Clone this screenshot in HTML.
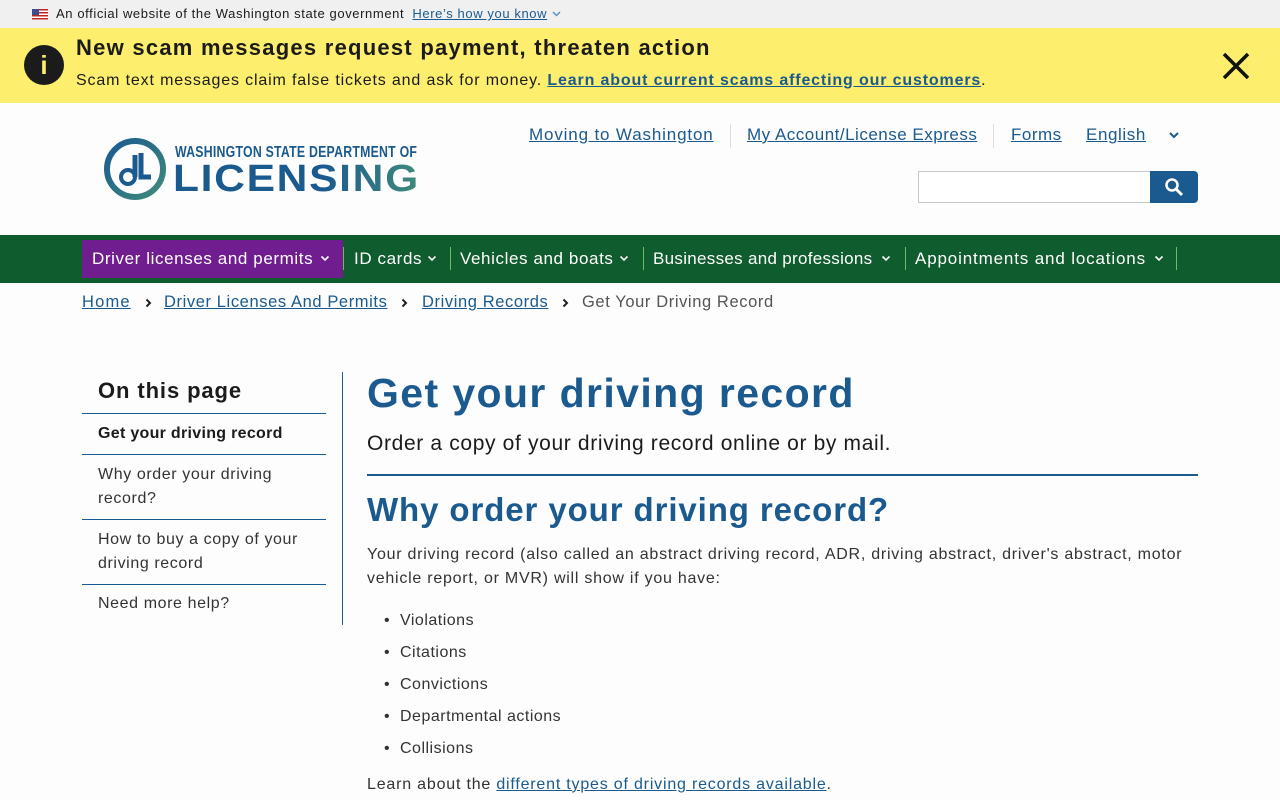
<!DOCTYPE html>
<html><head><meta charset="utf-8"><style>
*{box-sizing:border-box;margin:0;padding:0}
body{width:1280px;height:800px;overflow:hidden;background:#fdfdfd;font-family:"Liberation Sans",sans-serif;color:#1b1b1b;position:relative}
.a{position:absolute;white-space:nowrap}
a{color:#1a5a8f;text-decoration:underline}
.nav{color:#fff;font-size:17px;letter-spacing:0.6px;top:249px}
.bc{top:293px;font-size:16.5px;letter-spacing:0.6px;color:#555}
.ch{position:absolute;top:298px}
.nv{position:absolute;top:255px}
</style></head><body>
<div class="a" style="left:0;top:0;width:1280px;height:28px;background:#f0f0f0"></div>
<div class="a" style="left:32px;top:9px;width:16px;height:11px;background:repeating-linear-gradient(#b22 0 1.5px,#fff 1.5px 3px)"><div style="width:7px;height:6px;background:#3c4d8f"></div></div>
<div class="a" style="left:56px;top:6px;font-size:13px;letter-spacing:0.6px;color:#1b1b1b">An official website of the Washington state government <a style="margin-left:4px;color:#1a5a8f">Here’s how you know</a></div>
<svg class="a" style="left:552px;top:11px" width="9" height="7"><path d="M1 1l3.5 3.5L8 1" fill="none" stroke="#5a8fc8" stroke-width="1.5"/></svg>

<div class="a" style="left:0;top:28px;width:1280px;height:75px;background:#fdee6d"></div>
<div class="a" style="left:24px;top:45px;width:40px;height:40px;border-radius:50%;background:#1b1b1b;color:#fdee6d;font-weight:bold;font-size:26px;text-align:center;line-height:40px">i</div>
<div class="a" style="left:76px;top:35px;font-size:22px;font-weight:bold;letter-spacing:1.25px;color:#1b1b1b">New scam messages request payment, threaten action</div>
<div class="a" style="left:76px;top:72px;font-size:16px;letter-spacing:0.85px;color:#1b1b1b">Scam text messages claim false tickets and ask for money. <a style="font-weight:bold;color:#1a5a8f">Learn about current scams affecting our customers</a>.</div>
<svg class="a" style="left:1222px;top:52px" width="28" height="28" viewBox="0 0 28 28"><path d="M2 2L26 26M26 2L2 26" stroke="#111" stroke-width="3.5"/></svg>

<svg class="a" style="left:103px;top:137px" width="64" height="64" viewBox="0 0 64 64"><defs><linearGradient id="g" x1="0" y1="0" x2="1" y2="1"><stop offset="0" stop-color="#1a5a8f"/><stop offset="1" stop-color="#3f8a7c"/></linearGradient></defs><circle cx="32" cy="32" r="28" fill="none" stroke="url(#g)" stroke-width="6"/><circle cx="25" cy="40" r="7" fill="none" stroke="#1a5a8f" stroke-width="4"/><path d="M32 18v22M38 16v24h10" fill="none" stroke="#1a5a8f" stroke-width="5"/></svg>
<div class="a" style="left:175px;top:144px;font-size:16px;font-weight:bold;color:#1a5a8f;letter-spacing:0.3px;transform:scaleX(0.77);transform-origin:left">WASHINGTON STATE DEPARTMENT OF</div>
<div class="a" style="left:173px;top:158px;font-size:38px;font-weight:bold;letter-spacing:1.5px;background:linear-gradient(90deg,#1a5a8f 60%,#3f8a7c);-webkit-background-clip:text;color:transparent;transform:scaleX(1.12);transform-origin:left">LICENSING</div>

<div class="a" style="left:529px;top:125px;font-size:17px;letter-spacing:0.85px"><a>Moving to Washington</a></div>
<div class="a" style="left:730px;top:124px;width:1px;height:24px;background:#ddd"></div>
<div class="a" style="left:747px;top:125px;font-size:17px;letter-spacing:0.5px"><a>My Account/License Express</a></div>
<div class="a" style="left:993px;top:124px;width:1px;height:24px;background:#ddd"></div>
<div class="a" style="left:1011px;top:125px;font-size:17px;letter-spacing:0.5px"><a>Forms</a></div>
<div class="a" style="left:1086px;top:125px;font-size:17px;letter-spacing:0.6px"><a>English</a></div>
<svg class="a" style="left:1168px;top:130px" width="12" height="10"><path d="M2 3l4 4 4-4" fill="none" stroke="#1a5a8f" stroke-width="2"/></svg>
<div class="a" style="left:918px;top:171px;width:234px;height:32px;border:1px solid #c8c8c8;background:#fff"></div>
<div class="a" style="left:1150px;top:171px;width:48px;height:32px;background:#1a5a8f;border-radius:0 4px 4px 0"></div>
<svg class="a" style="left:1164px;top:177px" width="20" height="20"><circle cx="8" cy="8" r="5.5" fill="none" stroke="#fff" stroke-width="2.5"/><path d="M12 12l6 6" stroke="#fff" stroke-width="3"/></svg>

<div class="a" style="left:0;top:235px;width:1280px;height:48px;background:#0f5c2e"></div>
<div class="a" style="left:82px;top:240px;width:261px;height:38px;background:#6f1d8f"></div>
<div class="a" style="left:343px;top:247px;width:1px;height:23px;background:#6cbf5a"></div>
<div class="a" style="left:450px;top:247px;width:1px;height:23px;background:#6cbf5a"></div>
<div class="a" style="left:643px;top:247px;width:1px;height:23px;background:#6cbf5a"></div>
<div class="a" style="left:905px;top:247px;width:1px;height:23px;background:#6cbf5a"></div>
<div class="a" style="left:1176px;top:247px;width:1px;height:23px;background:#6cbf5a"></div>
<div class="a nav" style="left:92px">Driver licenses and permits</div>
<div class="a nav" style="left:354px">ID cards</div>
<div class="a nav" style="left:460px">Vehicles and boats</div>
<div class="a nav" style="left:653px;letter-spacing:0.3px">Businesses and professions</div>
<div class="a nav" style="left:915px;letter-spacing:0.85px">Appointments and locations</div>
<svg class="nv" style="left:320px" width="10" height="7"><path d="M1.5 1.5l3.5 3.5 3.5-3.5" fill="none" stroke="#fff" stroke-width="1.6"/></svg>
<svg class="nv" style="left:427px" width="10" height="7"><path d="M1.5 1.5l3.5 3.5 3.5-3.5" fill="none" stroke="#fff" stroke-width="1.6"/></svg>
<svg class="nv" style="left:619px" width="10" height="7"><path d="M1.5 1.5l3.5 3.5 3.5-3.5" fill="none" stroke="#fff" stroke-width="1.6"/></svg>
<svg class="nv" style="left:881px" width="10" height="7"><path d="M1.5 1.5l3.5 3.5 3.5-3.5" fill="none" stroke="#fff" stroke-width="1.6"/></svg>
<svg class="nv" style="left:1154px" width="10" height="7"><path d="M1.5 1.5l3.5 3.5 3.5-3.5" fill="none" stroke="#fff" stroke-width="1.6"/></svg>

<div class="a bc" style="left:82px;letter-spacing:1.2px"><a>Home</a></div>
<svg class="ch" style="left:145px" width="7" height="10"><path d="M1.5 1.5l3.5 3.5-3.5 3.5" fill="none" stroke="#222" stroke-width="2"/></svg>
<div class="a bc" style="left:164px"><a>Driver Licenses And Permits</a></div>
<svg class="ch" style="left:401px" width="7" height="10"><path d="M1.5 1.5l3.5 3.5-3.5 3.5" fill="none" stroke="#222" stroke-width="2"/></svg>
<div class="a bc" style="left:422px"><a>Driving Records</a></div>
<svg class="ch" style="left:562px" width="7" height="10"><path d="M1.5 1.5l3.5 3.5-3.5 3.5" fill="none" stroke="#222" stroke-width="2"/></svg>
<div class="a bc" style="left:582px">Get Your Driving Record</div>

<div class="a" style="left:98px;top:378px;font-size:22px;font-weight:bold;letter-spacing:0.9px">On this page</div>
<div class="a" style="left:82px;top:413px;width:244px;height:1px;background:#1a5a8f"></div>
<div class="a" style="left:98px;top:425px;font-size:16px;font-weight:bold;letter-spacing:0.3px">Get your driving record</div>
<div class="a" style="left:82px;top:454px;width:244px;height:1px;background:#1a5a8f"></div>
<div class="a" style="left:98px;top:463px;font-size:16px;line-height:24px;letter-spacing:0.6px;color:#333">Why order your driving<br>record?</div>
<div class="a" style="left:82px;top:519px;width:244px;height:1px;background:#1a5a8f"></div>
<div class="a" style="left:98px;top:528px;font-size:16px;line-height:24px;letter-spacing:0.6px;color:#333">How to buy a copy of your<br>driving record</div>
<div class="a" style="left:82px;top:584px;width:244px;height:1px;background:#1a5a8f"></div>
<div class="a" style="left:98px;top:595px;font-size:16px;letter-spacing:0.6px;color:#333">Need more help?</div>
<div class="a" style="left:342px;top:372px;width:1px;height:253px;background:#1a5a8f"></div>

<div class="a" style="left:367px;top:370px;font-size:41px;font-weight:bold;letter-spacing:1.4px;color:#1a5a8f">Get your driving record</div>
<div class="a" style="left:367px;top:432px;font-size:21px;letter-spacing:0.65px;color:#1b1b1b">Order a copy of your driving record online or by mail.</div>
<div class="a" style="left:367px;top:474px;width:831px;height:2px;background:#1a5a8f"></div>
<div class="a" style="left:367px;top:491px;font-size:33px;font-weight:bold;letter-spacing:0.9px;color:#1a5a8f">Why order your driving record?</div>
<div class="a" style="left:367px;top:543px;font-size:16px;line-height:24px;letter-spacing:0.75px;color:#333;white-space:normal;width:840px">Your driving record (also called an abstract driving record, ADR, driving abstract, driver's abstract, motor vehicle report, or MVR) will show if you have:</div>
<div class="a" style="left:384px;top:605px;font-size:16px;line-height:32px;letter-spacing:0.5px;color:#333">•&nbsp; Violations<br>•&nbsp; Citations<br>•&nbsp; Convictions<br>•&nbsp; Departmental actions<br>•&nbsp; Collisions</div>
<div class="a" style="left:367px;top:776px;font-size:16px;letter-spacing:0.8px;color:#333">Learn about the <a>different types of driving records available</a>.</div>
</body></html>
